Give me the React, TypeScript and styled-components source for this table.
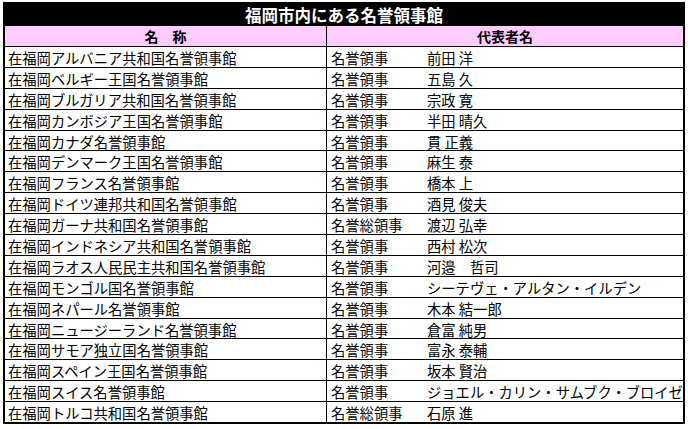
import React from "react";
import styled, { createGlobalStyle } from "styled-components";

const GlobalStyle = createGlobalStyle`
  html, body {
    margin: 0;
    padding: 0;
    background: #fff;
  }
  body {
    font-family: "Noto Sans CJK JP", "Noto Sans", sans-serif;
    color: #000;
  }
`;

interface Consulate {
  name: string;
  role: string;
  person: string;
}

const consulates: Consulate[] = [
  { name: "在福岡アルバニア共和国名誉領事館", role: "名誉領事", person: "前田 洋" },
  { name: "在福岡ベルギー王国名誉領事館", role: "名誉領事", person: "五島 久" },
  { name: "在福岡ブルガリア共和国名誉領事館", role: "名誉領事", person: "宗政 寛" },
  { name: "在福岡カンボジア王国名誉領事館", role: "名誉領事", person: "半田 晴久" },
  { name: "在福岡カナダ名誉領事館", role: "名誉領事", person: "貫 正義" },
  { name: "在福岡デンマーク王国名誉領事館", role: "名誉領事", person: "麻生 泰" },
  { name: "在福岡フランス名誉領事館", role: "名誉領事", person: "橋本 上" },
  { name: "在福岡ドイツ連邦共和国名誉領事館", role: "名誉領事", person: "酒見 俊夫" },
  { name: "在福岡ガーナ共和国名誉領事館", role: "名誉総領事", person: "渡辺 弘幸" },
  { name: "在福岡インドネシア共和国名誉領事館", role: "名誉領事", person: "西村 松次" },
  { name: "在福岡ラオス人民民主共和国名誉領事館", role: "名誉領事", person: "河邉　哲司" },
  { name: "在福岡モンゴル国名誉領事館", role: "名誉領事", person: "シーテヴェ・アルタン・イルデン" },
  { name: "在福岡ネパール名誉領事館", role: "名誉領事", person: "木本 結一郎" },
  { name: "在福岡ニュージーランド名誉領事館", role: "名誉領事", person: "倉富 純男" },
  { name: "在福岡サモア独立国名誉領事館", role: "名誉領事", person: "富永 泰輔" },
  { name: "在福岡スペイン王国名誉領事館", role: "名誉領事", person: "坂本 賢治" },
  { name: "在福岡スイス名誉領事館", role: "名誉領事", person: "ジョエル・カリン・サムブク・ブロイゼ" },
  { name: "在福岡トルコ共和国名誉領事館", role: "名誉総領事", person: "石原 進" },
];

const Sheet = styled.div`
  box-sizing: border-box;
  width: 682px;
  margin: 2px 0 0 3px;
  border: 2px solid #000;
`;

const Title = styled.div`
  height: 22px;
  line-height: 22px;
  background: #000;
  color: #fff;
  font-size: 16.5px;
  font-weight: 700;
  text-align: center;
`;

const Row = styled.div<{ $head?: boolean }>`
  display: grid;
  grid-template-columns: 322px 1fr;
  height: ${(p) => (p.$head ? "20px" : "20.9px")};
  box-sizing: border-box;
  border-top: ${(p) => (p.$head ? "none" : "1px solid #000")};
  background: ${(p) => (p.$head ? "#ffccff" : "#fff")};
`;

const Cell = styled.div<{ $head?: boolean; $first?: boolean }>`
  box-sizing: border-box;
  display: flex;
  align-items: center;
  justify-content: ${(p) => (p.$head ? "center" : "flex-start")};
  padding-left: ${(p) => (p.$head ? "0" : p.$first ? "3px" : "4px")};
  padding-top: ${(p) => (p.$head ? "0" : "1px")};
  border-right: ${(p) => (p.$first ? "1px solid #000" : "none")};
  font-size: ${(p) => (p.$head ? "14px" : "14.3px")};
  font-weight: ${(p) => (p.$head ? 700 : 400)};
  white-space: nowrap;
  overflow: hidden;
`;

const Role = styled.span`
  display: inline-block;
  width: 96px;
`;

export default function App() {
  return (
    <>
      <GlobalStyle />
      <Sheet>
        <Title>福岡市内にある名誉領事館</Title>
        <Row $head>
          <Cell $head $first>名　称</Cell>
          <Cell $head>代表者名</Cell>
        </Row>
        {consulates.map((c) => (
          <Row key={c.name}>
            <Cell $first>{c.name}</Cell>
            <Cell>
              <Role>{c.role}</Role>
              {c.person}
            </Cell>
          </Row>
        ))}
      </Sheet>
    </>
  );
}
